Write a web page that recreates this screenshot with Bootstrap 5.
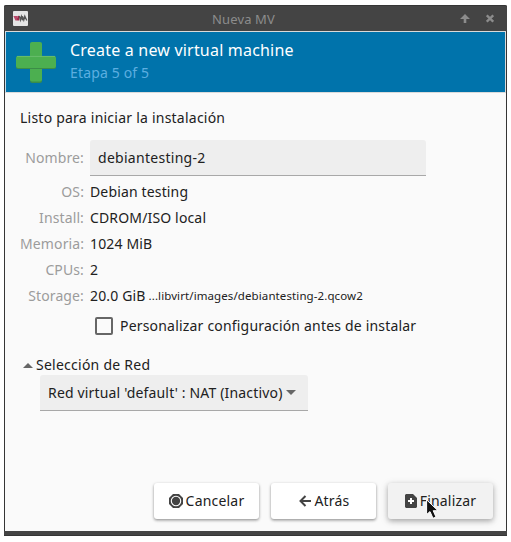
<!DOCTYPE html>
<html lang="es">
<head>
<meta charset="utf-8">
<meta name="viewport" content="width=device-width, initial-scale=1">
<title>Nueva MV</title>
<link href="https://cdn.jsdelivr.net/npm/bootstrap@5.3.0/dist/css/bootstrap.min.css" rel="stylesheet">
<style>
body{background:#fff;font-family:"Noto Sans",sans-serif;font-size:14px;line-height:20px;color:#212121;overflow:hidden}
.win{width:503px;height:531px;margin:5px 0 0 4px;background:#fafafa;border:1px solid #353535;border-top:0;border-bottom:0;border-radius:2px 2px 0 0}
.win>*{flex-shrink:0}
.titlebar{height:26px;margin:0 -1px;background:#444;border-top:1px solid #353535;border-radius:2px 2px 0 0;color:#8c8c8c;padding:0 13px 0 9px;font-size:13px}
.titlebar .ttl{letter-spacing:.12px;margin-right:1px}
.banner{height:62px;background:#0073ab;border:1px solid #dadada;border-left-color:#c8dce8;padding-left:9px;color:#fff}
.banner h1{font-size:16px;line-height:22px;font-weight:400;letter-spacing:.2px}
.banner .step{color:#5caee0;line-height:24px;letter-spacing:.15px}
.banner .heads{margin:7px 0 0 13px}
.lead-in{margin:15px 0 0 15px;letter-spacing:.23px}
.facts{display:grid;grid-template-columns:64px 1fr;column-gap:6px;margin:12px 0 0 15px;grid-template-rows:36px 29px 26px 26px 26px 26px;align-items:center}
.facts dt{font-weight:400;color:#9c9c9c;text-align:right;white-space:nowrap;letter-spacing:.12px}
.facts dd,.facts dt{margin:0}
.facts dd{letter-spacing:.15px}
.facts .os{padding-top:3px}
.field{background:#eee;border:0;border-bottom:1px solid #a8a8a8;border-radius:3px 3px 0 0;height:36px;padding:0 8px;color:#212121;font-size:14px;box-shadow:none;letter-spacing:.17px}
.name-field{width:336px;letter-spacing:.28px}
.facts .gib{margin-right:3px}
.path{font-size:11.5px;letter-spacing:.1px}
.cbx{width:18px;height:18px;border:2px solid #666;border-radius:2px;margin:0 7px 0 90px}
.chk{margin-top:7px;height:20px;letter-spacing:.19px}
.net{margin:19px 0 0 18px;height:20px;gap:3px;letter-spacing:.25px}
.net-field{width:268px;margin:0 0 0 35px;gap:3px}
.foot{margin:72px 13px 0 0;gap:12px}
.foot .btn{width:105px;height:36px;padding:0;border:0;border-radius:3px;background:#fff;font-size:14px;line-height:20px;color:#212121;gap:3px;letter-spacing:.2px;box-shadow:0 1px 3px rgba(0,0,0,.34),0 2px 3px rgba(0,0,0,.12)}
.foot .btn.back{padding-left:2px}
.foot .btn.hov{background:#f2f2f2;box-shadow:0 2px 5px rgba(0,0,0,.26),0 2px 10px rgba(0,0,0,.12)}
.bottombar{height:5px;background:#444;border-bottom:1px solid #353535;margin:12px -1px 0}
.pointer{left:426px;top:499px}
svg{display:block;flex:none}
</style>
<script src="https://cdn.jsdelivr.net/npm/bootstrap@5.3.0/dist/js/bootstrap.bundle.min.js"></script>
</head>
<body>
<main class="win d-flex flex-column">
  <header class="titlebar d-flex align-items-center justify-content-between">
    <svg width="15" height="15" viewBox="0 0 15 15"><rect width="15" height="15" rx="1" fill="#e4e4e4"/><path d="M.4 5H4.8L3.6 9.5H2.4Z" fill="#b8486a"/><path d="M4 9.5 5.6 5V9.5" fill="none" stroke="#a02848" stroke-width="1.2"/><path d="M6.3 5 7.4 9 8.4 5.4 9.4 9.3V5.2L10.8 9 11.8 5.2 13.8 9.6" fill="none" stroke="#555" stroke-width="1.3"/></svg>
    <span class="flex-fill text-center"><span class="ttl">Nueva MV</span></span>
    <span class="d-flex"><svg class="me-3" width="10" height="9" viewBox="0 0 10 9"><path d="M5 0 10 5H6.3V9H3.7V5H0Z" fill="#8c8c8c"/></svg><svg width="8" height="9" viewBox="0 0 8 9"><path d="M.8 1.3 7.2 7.7M7.2 1.3.8 7.7" stroke="#8c8c8c" stroke-width="2.3"/></svg></span>
  </header>
  <section class="banner d-flex">
    <svg class="mt-2" width="42" height="44" viewBox="0 0 42 44"><path d="M17 3h8a2 2 0 0 1 2 2v36a2 2 0 0 1-2 2h-8a2 2 0 0 1-2-2V5a2 2 0 0 1 2-2Z" fill="#398c4a"/><rect x="15" y="2" width="12" height="39.5" rx="2" fill="#4caf50"/><rect x="1" y="17" width="40" height="12" rx="2" fill="#3b8d47"/><rect x="1" y="16" width="40" height="12" rx="2" fill="#4caf50"/><path d="M2 16.4h38" stroke="#71c274" stroke-width=".8"/></svg>
    <div class="heads"><h1 class="mb-0">Create a new virtual machine</h1><div class="step">Etapa 5 of 5</div></div>
  </section>
  <div class="lead-in">Listo para iniciar la instalación</div>
  <dl class="facts mb-0">
    <dt>Nombre:</dt><dd><input class="form-control field name-field" value="debiantesting-2" aria-label="Nombre"></dd>
    <dt class="os">OS:</dt><dd class="os">Debian testing</dd>
    <dt>Install:</dt><dd>CDROM/ISO local</dd>
    <dt>Memoria:</dt><dd>1024 MiB</dd>
    <dt>CPUs:</dt><dd>2</dd>
    <dt>Storage:</dt><dd class="d-flex"><span class="gib">20.0 GiB</span><span class="path">...libvirt/images/debiantesting-2.qcow2</span></dd>
  </dl>
  <div class="chk d-flex align-items-center"><span class="cbx" role="checkbox" aria-checked="false"></span><span>Personalizar configuración antes de instalar</span></div>
  <div class="net d-flex align-items-center"><svg width="10" height="5" viewBox="0 0 10 5"><path d="M0 5 5 0 10 5Z" fill="#666"/></svg><span>Selección de Red</span></div>
  <div class="field net-field d-flex align-items-center"><span>Red virtual 'default' : NAT (Inactivo)</span><svg width="10" height="5" viewBox="0 0 10 5"><path d="M0 0 5 5 10 0Z" fill="#666"/></svg></div>
  <div class="foot d-flex justify-content-end">
    <button class="btn d-flex align-items-center justify-content-center"><svg width="14" height="14" viewBox="0 0 14 14"><path d="M4 0h6l4 4v6l-4 4H4l-4-4V4Z" fill="#444"/><circle cx="7" cy="7" r="4.7" fill="none" stroke="#fff" stroke-width="1.1"/></svg>Cancelar</button>
    <button class="btn back d-flex align-items-center justify-content-center"><svg width="12" height="12" viewBox="0 0 12 12"><path d="M12 6H2M6.5 1 1.5 6 6.5 11" fill="none" stroke="#444" stroke-width="2"/></svg>Atrás</button>
    <button class="btn hov d-flex align-items-center justify-content-center"><svg width="12" height="14" viewBox="0 0 12 14"><path d="M1 0H8L12 4V13L11 14H1L0 13V1Z" fill="#444"/><path d="M6 4v6M3 7h6" stroke="#fff" stroke-width="2"/></svg>Finalizar</button>
  </div>
  <div class="bottombar"></div>
</main>
<svg class="pointer position-absolute" width="14" height="21" viewBox="0 0 14 21"><path d="M.6.8V15.5L4 12.6 7 19.3 10 18 7.2 11.7H12Z" fill="#111" stroke="#fff" stroke-width="1"/></svg>
</body>
</html>
